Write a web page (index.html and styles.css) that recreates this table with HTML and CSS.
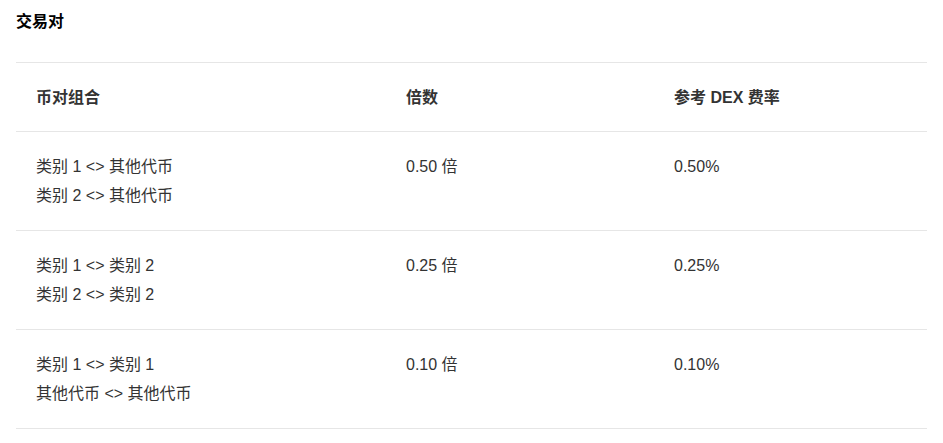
FILE: index.html
```html
<!DOCTYPE html>
<html lang="zh-CN">
<head>
    <meta charset="UTF-8">
    <meta name="viewport" content="width=device-width, initial-scale=1.0">
    <title>交易对</title>
    <link rel="stylesheet" href="styles.css">
</head>
<body>
    <div class="section">
        <h3 class="title">交易对</h3>
        <table class="pairs">
            <thead>
                <tr>
                    <th class="col-pair">币对组合</th>
                    <th class="col-mult">倍数</th>
                    <th class="col-fee">参考 DEX 费率</th>
                </tr>
            </thead>
            <tbody>
                <tr>
                    <td>类别 1 &lt;&gt; 其他代币<br>类别 2 &lt;&gt; 其他代币</td>
                    <td>0.50 倍</td>
                    <td>0.50%</td>
                </tr>
                <tr>
                    <td>类别 1 &lt;&gt; 类别 2<br>类别 2 &lt;&gt; 类别 2</td>
                    <td>0.25 倍</td>
                    <td>0.25%</td>
                </tr>
                <tr>
                    <td>类别 1 &lt;&gt; 类别 1<br>其他代币 &lt;&gt; 其他代币</td>
                    <td>0.10 倍</td>
                    <td>0.10%</td>
                </tr>
            </tbody>
        </table>
    </div>
</body>
</html>
```

FILE: styles.css
```css
body {
    margin: 0;
    background: #fff;
    color: #333;
    font-family: "Liberation Sans", Arial, "Noto Sans CJK SC", sans-serif;
}
.section { padding: 10px 16px; }
.title {
    margin: 0 0 28px;
    font-size: 16px;
    line-height: 24px;
    font-weight: bold;
    color: #000;
}
.pairs {
    width: 911px;
    border-collapse: collapse;
    font-size: 16px;
    line-height: 29px;
}
.pairs th, .pairs td {
    padding: 20px;
    text-align: left;
    vertical-align: top;
    border-top: 1px solid #e6e6e6;
    border-bottom: 1px solid #e6e6e6;
}
.pairs th { font-weight: bold; color: #333; padding-bottom: 19px; }
.col-pair { width: 330px; }
.col-mult { width: 228px; }
```
